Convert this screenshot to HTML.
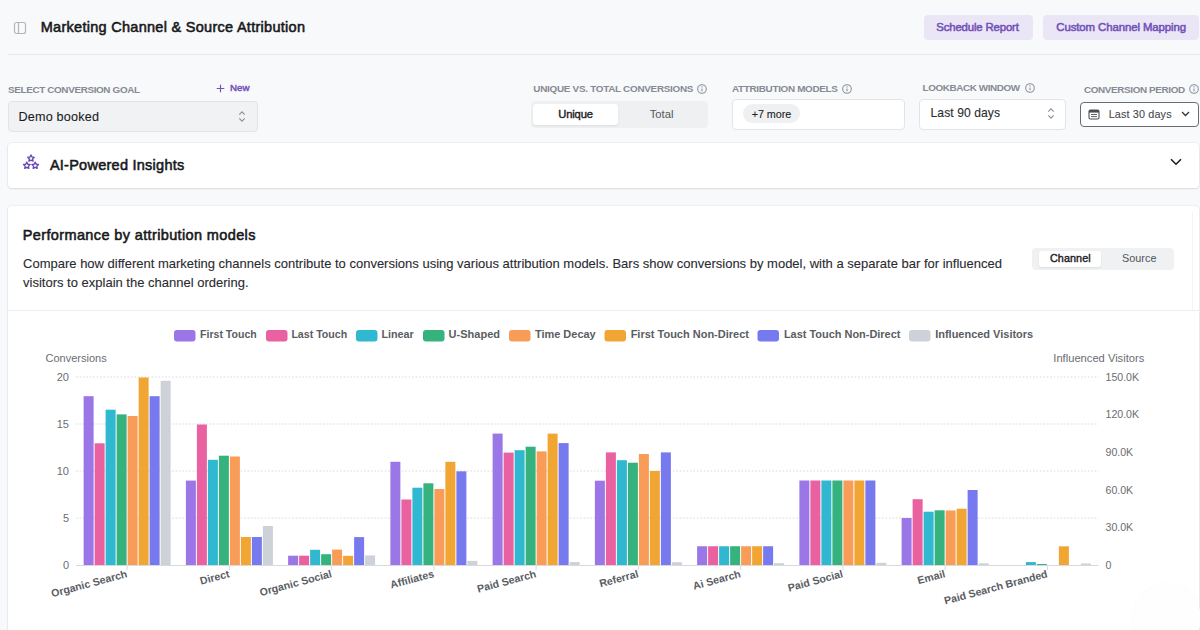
<!DOCTYPE html>
<html><head><meta charset="utf-8"><style>
html,body{margin:0;padding:0;width:1200px;height:630px;overflow:hidden;background:#f8f9fb;font-family:"Liberation Sans", sans-serif;}
.t{position:absolute;white-space:nowrap;line-height:1;transform-origin:0 0;}
.r{position:absolute;}
svg text{font-family:"Liberation Sans", sans-serif;}
</style></head><body>
<svg class="r" style="left:13px;top:21px" width="14" height="14" viewBox="0 0 14 14"><rect x="1.5" y="1.5" width="11" height="11" rx="2" fill="none" stroke="#b2b5bb" stroke-width="1.2"/><line x1="5.5" y1="1.5" x2="5.5" y2="12.5" stroke="#b2b5bb" stroke-width="1.2"/></svg>
<div class="t" style="left:40.77px;top:19.88px;font-size:14.5px;font-weight:400;color:#17181a;letter-spacing:0.279px;-webkit-text-stroke:0.55px #17181a;">Marketing Channel &amp; Source Attribution</div>
<div class="r" style="left:8px;top:54px;width:1192.00px;height:1.00px;background:#e6e8eb"></div>
<div class="r" style="left:924px;top:15px;width:109.00px;height:25.00px;background:#ebe6f6;border-radius:4px"></div>
<div class="t" style="left:936.27px;top:21.51px;font-size:11.4px;font-weight:400;color:#7352b9;letter-spacing:-0.160px;-webkit-text-stroke:0.55px #7352b9;">Schedule Report</div>
<div class="r" style="left:1043px;top:15px;width:156.00px;height:25.00px;background:#ebe6f6;border-radius:4px"></div>
<div class="t" style="left:1056.28px;top:21.51px;font-size:11.4px;font-weight:400;color:#7352b9;letter-spacing:-0.091px;-webkit-text-stroke:0.55px #7352b9;">Custom Channel Mapping</div>
<div class="t" style="left:8.00px;top:84.58px;font-size:9.9px;font-weight:700;color:#868a92;letter-spacing:-0.349px;">SELECT CONVERSION GOAL</div>
<svg class="r" style="left:215px;top:83px" width="11" height="11" viewBox="0 0 11 11"><path d="M5.5 1.7v7.6M1.7 5.5h7.6" stroke="#7352b9" stroke-width="1.15" fill="none"/></svg>
<div class="t" style="left:230.23px;top:83.14px;font-size:9.6px;font-weight:400;color:#7352b9;transform:scaleX(1.0145);-webkit-text-stroke:0.45px #7352b9;">New</div>
<div class="r" style="left:8px;top:101px;width:250.00px;height:30.50px;background:#f1f2f4;border:1px solid #e2e4e8;border-radius:4px;box-sizing:border-box"></div>
<div class="t" style="left:18.45px;top:110.59px;font-size:12.6px;font-weight:400;color:#1b1c1f;letter-spacing:0.209px;-webkit-text-stroke:0.1px #1b1c1f;">Demo booked</div>
<svg class="r" style="left:237px;top:110px" width="10" height="13" viewBox="0 0 10 13"><path d="M2.3 4.6L5 1.9l2.7 2.7M2.3 8.4L5 11.1l2.7-2.7" stroke="#8d9097" stroke-width="1.15" fill="none"/></svg>
<div class="t" style="left:533.30px;top:84.18px;font-size:9.9px;font-weight:700;color:#868a92;letter-spacing:-0.268px;">UNIQUE VS. TOTAL CONVERSIONS</div>
<svg class="r" style="left:697px;top:84px" width="10" height="10" viewBox="0 0 10 10"><circle cx="5" cy="5" r="4.3" fill="none" stroke="#8a8f98" stroke-width="1.05"/><path d="M5 4.4v2.9" stroke="#8a8f98" stroke-width="1.1"/><circle cx="5" cy="2.95" r="0.65" fill="#8a8f98"/></svg>
<div class="r" style="left:531px;top:101px;width:176.50px;height:26.50px;background:#eff0f2;border-radius:4px"></div>
<div class="r" style="left:533px;top:104px;width:85.30px;height:20.70px;background:#fff;border-radius:3px;box-shadow:0 1px 2px rgba(0,0,0,.08)"></div>
<div class="t" style="left:558.20px;top:108.68px;font-size:11.2px;font-weight:400;color:#1f2023;letter-spacing:-0.126px;-webkit-text-stroke:0.4px #1f2023;">Unique</div>
<div class="t" style="left:649.73px;top:108.68px;font-size:11.2px;font-weight:400;color:#55585e;letter-spacing:0.026px;-webkit-text-stroke:0.05px #55585e;">Total</div>
<div class="t" style="left:732.00px;top:84.18px;font-size:9.9px;font-weight:700;color:#868a92;letter-spacing:-0.311px;">ATTRIBUTION MODELS</div>
<svg class="r" style="left:842px;top:84px" width="10" height="10" viewBox="0 0 10 10"><circle cx="5" cy="5" r="4.3" fill="none" stroke="#8a8f98" stroke-width="1.05"/><path d="M5 4.4v2.9" stroke="#8a8f98" stroke-width="1.1"/><circle cx="5" cy="2.95" r="0.65" fill="#8a8f98"/></svg>
<div class="r" style="left:732px;top:99px;width:173.00px;height:31.00px;background:#fff;border:1px solid #e2e4e8;border-radius:4px;box-sizing:border-box"></div>
<div class="r" style="left:742.5px;top:104px;width:57.50px;height:19.00px;background:#eff0f2;border-radius:10px"></div>
<div class="t" style="left:751.75px;top:108.62px;font-size:10.8px;font-weight:400;color:#222;letter-spacing:-0.067px;-webkit-text-stroke:0.1px #222;">+7 more</div>
<div class="t" style="left:922.60px;top:83.08px;font-size:9.9px;font-weight:700;color:#868a92;letter-spacing:-0.407px;">LOOKBACK WINDOW</div>
<svg class="r" style="left:1025px;top:83px" width="10" height="10" viewBox="0 0 10 10"><circle cx="5" cy="5" r="4.3" fill="none" stroke="#8a8f98" stroke-width="1.05"/><path d="M5 4.4v2.9" stroke="#8a8f98" stroke-width="1.1"/><circle cx="5" cy="2.95" r="0.65" fill="#8a8f98"/></svg>
<div class="r" style="left:919px;top:98.5px;width:147.00px;height:31.00px;background:#fff;border:1px solid #e2e4e8;border-radius:4px;box-sizing:border-box"></div>
<div class="t" style="left:930.55px;top:107.31px;font-size:12.1px;font-weight:400;color:#2b2c2f;letter-spacing:0.079px;-webkit-text-stroke:0.1px #2b2c2f;">Last 90 days</div>
<svg class="r" style="left:1046px;top:107px" width="10" height="13" viewBox="0 0 10 13"><path d="M2.3 4.6L5 1.9l2.7 2.7M2.3 8.4L5 11.1l2.7-2.7" stroke="#8d9097" stroke-width="1.15" fill="none"/></svg>
<div class="t" style="left:1084.00px;top:84.58px;font-size:9.9px;font-weight:700;color:#868a92;letter-spacing:-0.366px;">CONVERSION PERIOD</div>
<svg class="r" style="left:1189px;top:84px" width="10" height="10" viewBox="0 0 10 10"><circle cx="5" cy="5" r="4.3" fill="none" stroke="#8a8f98" stroke-width="1.05"/><path d="M5 4.4v2.9" stroke="#8a8f98" stroke-width="1.1"/><circle cx="5" cy="2.95" r="0.65" fill="#8a8f98"/></svg>
<div class="r" style="left:1080px;top:101.5px;width:119.00px;height:25.00px;background:#fff;border:1px solid #686c73;border-radius:4px;box-sizing:border-box"></div>
<svg class="r" style="left:1088px;top:109px" width="12" height="11" viewBox="0 0 12 11"><rect x="1" y="1" width="10" height="9" rx="1.5" fill="none" stroke="#4a4d53" stroke-width="1.1"/><rect x="1" y="1" width="10" height="2.6" fill="#4a4d53"/><path d="M3 5.5h6M3 7.6h6" stroke="#4a4d53" stroke-width="0.9"/></svg>
<div class="t" style="left:1108.65px;top:108.62px;font-size:10.8px;font-weight:400;color:#45484e;letter-spacing:0.152px;-webkit-text-stroke:0.1px #45484e;">Last 30 days</div>
<svg class="r" style="left:1181px;top:109px" width="9" height="9" viewBox="0 0 9 9"><path d="M1 3l3.5 3.5L8 3" stroke="#333" stroke-width="1.3" fill="none"/></svg>
<div class="r" style="left:8px;top:143px;width:1191.00px;height:45.00px;background:#fff;border-radius:4px;box-shadow:0 1px 2px rgba(16,24,40,.10), 0 0 0 1px rgba(16,24,40,.04)"></div>
<svg class="r" style="left:22px;top:154px" width="18" height="16" viewBox="0 0 18 16"><path transform="translate(9 4.4) scale(0.95)" d="M0 -3.6 L1.06 -1.46 L3.42 -1.11 L1.71 0.56 L2.12 2.91 L0 1.8 L-2.12 2.91 L-1.71 0.56 L-3.42 -1.11 L-1.06 -1.46 Z" fill="none" stroke="#6849b3" stroke-width="1.45" stroke-linejoin="round"/><path transform="translate(4.8 11.6) scale(0.95)" d="M0 -3.6 L1.06 -1.46 L3.42 -1.11 L1.71 0.56 L2.12 2.91 L0 1.8 L-2.12 2.91 L-1.71 0.56 L-3.42 -1.11 L-1.06 -1.46 Z" fill="none" stroke="#6849b3" stroke-width="1.45" stroke-linejoin="round"/><path transform="translate(13.2 11.6) scale(0.95)" d="M0 -3.6 L1.06 -1.46 L3.42 -1.11 L1.71 0.56 L2.12 2.91 L0 1.8 L-2.12 2.91 L-1.71 0.56 L-3.42 -1.11 L-1.06 -1.46 Z" fill="none" stroke="#6849b3" stroke-width="1.45" stroke-linejoin="round"/></svg>
<div class="t" style="left:49.88px;top:158.08px;font-size:14.5px;font-weight:400;color:#17181a;letter-spacing:0.258px;-webkit-text-stroke:0.55px #17181a;">AI-Powered Insights</div>
<svg class="r" style="left:1169px;top:156px" width="14" height="12" viewBox="0 0 14 12"><path d="M2 3.2l5 5 5-5" stroke="#1b1c1f" stroke-width="1.6" fill="none"/></svg>
<div class="r" style="left:8px;top:206px;width:1191.00px;height:474.00px;background:#fff;border-radius:4px;box-shadow:0 1px 2px rgba(16,24,40,.10), 0 0 0 1px rgba(16,24,40,.04)"></div>
<div class="t" style="left:22.77px;top:228.28px;font-size:14.5px;font-weight:400;color:#17181a;letter-spacing:0.371px;-webkit-text-stroke:0.55px #17181a;">Performance by attribution models</div>
<div class="t" style="left:23.05px;top:257.25px;font-size:13px;font-weight:400;color:#2a2b2f;-webkit-text-stroke:0.1px #2a2b2f;">Compare how different marketing channels contribute to conversions using various attribution models. Bars show conversions by model, with a separate bar for influenced</div>
<div class="t" style="left:23.05px;top:276.15px;font-size:13px;font-weight:400;color:#2a2b2f;-webkit-text-stroke:0.1px #2a2b2f;">visitors to explain the channel ordering.</div>
<div class="r" style="left:1032px;top:247.5px;width:142.00px;height:22.00px;background:#f0f1f3;border-radius:4px"></div>
<div class="r" style="left:1039px;top:251px;width:62.00px;height:15.50px;background:#fff;border-radius:3px;box-shadow:0 1px 2px rgba(0,0,0,.08)"></div>
<div class="t" style="left:1049.90px;top:253.22px;font-size:10.8px;font-weight:400;color:#1f2023;letter-spacing:0.097px;-webkit-text-stroke:0.4px #1f2023;">Channel</div>
<div class="t" style="left:1122.03px;top:253.22px;font-size:10.8px;font-weight:400;color:#55585e;letter-spacing:0.049px;-webkit-text-stroke:0.05px #55585e;">Source</div>
<div class="r" style="left:8px;top:310px;width:1191.00px;height:1.00px;background:#eceef1"></div>
<div class="r" style="left:1192px;top:212px;width:1.00px;height:98.00px;background:#f3f4f6"></div>
<div class="r" style="left:1133px;top:584px;width:68.00px;height:68.00px;background:#fefefe;border-radius:50%;box-shadow:0 0 3px rgba(0,0,0,.035)"></div>
<svg class="r" style="left:0;top:0" width="1200" height="630" viewBox="0 0 1200 630"><rect x="174" y="330" width="21.5" height="11.5" rx="3" fill="#9a76e7"/><text x="200.1" y="338.3" font-size="11" font-weight="700" fill="#5a5d63" textLength="56.60000000000001" lengthAdjust="spacingAndGlyphs">First Touch</text><rect x="266" y="330" width="21.5" height="11.5" rx="3" fill="#e961a0"/><text x="291.4" y="338.3" font-size="11" font-weight="700" fill="#5a5d63" textLength="55.8" lengthAdjust="spacingAndGlyphs">Last Touch</text><rect x="356" y="330" width="21.5" height="11.5" rx="3" fill="#2fb8d0"/><text x="381.4" y="338.3" font-size="11" font-weight="700" fill="#5a5d63" textLength="32.3" lengthAdjust="spacingAndGlyphs">Linear</text><rect x="423" y="330" width="21.5" height="11.5" rx="3" fill="#35b27e"/><text x="448.59999999999997" y="338.3" font-size="11" font-weight="700" fill="#5a5d63" textLength="51.40000000000002" lengthAdjust="spacingAndGlyphs">U-Shaped</text><rect x="509" y="330" width="21.5" height="11.5" rx="3" fill="#f89c58"/><text x="534.9" y="338.3" font-size="11" font-weight="700" fill="#5a5d63" textLength="60.8" lengthAdjust="spacingAndGlyphs">Time Decay</text><rect x="604.5" y="330" width="21.5" height="11.5" rx="3" fill="#f1a533"/><text x="630.65" y="338.3" font-size="11" font-weight="700" fill="#5a5d63" textLength="118.3" lengthAdjust="spacingAndGlyphs">First Touch Non-Direct</text><rect x="757.5" y="330" width="21.5" height="11.5" rx="3" fill="#7779ee"/><text x="783.9" y="338.3" font-size="11" font-weight="700" fill="#5a5d63" textLength="116.55" lengthAdjust="spacingAndGlyphs">Last Touch Non-Direct</text><rect x="909" y="330" width="21.5" height="11.5" rx="3" fill="#cdd1d8"/><text x="935.1999999999999" y="338.3" font-size="11" font-weight="700" fill="#5a5d63" textLength="98.00000000000004" lengthAdjust="spacingAndGlyphs">Influenced Visitors</text><text x="45.5" y="362" font-size="11" fill="#6a6d72">Conversions</text><text x="1144.3" y="362" font-size="11" fill="#6a6d72" text-anchor="end" textLength="91" lengthAdjust="spacingAndGlyphs">Influenced Visitors</text><text x="69" y="568.8" font-size="11" fill="#6a6d72" text-anchor="end">0</text><line x1="76" y1="518.0" x2="1098.5" y2="518.0" stroke="#d8dbe0" stroke-width="1" stroke-dasharray="1.7 1.73"/><text x="69" y="521.8" font-size="11" fill="#6a6d72" text-anchor="end">5</text><line x1="76" y1="471.0" x2="1098.5" y2="471.0" stroke="#d8dbe0" stroke-width="1" stroke-dasharray="1.7 1.73"/><text x="69" y="474.8" font-size="11" fill="#6a6d72" text-anchor="end">10</text><line x1="76" y1="424.0" x2="1098.5" y2="424.0" stroke="#d8dbe0" stroke-width="1" stroke-dasharray="1.7 1.73"/><text x="69" y="427.8" font-size="11" fill="#6a6d72" text-anchor="end">15</text><line x1="76" y1="377.0" x2="1098.5" y2="377.0" stroke="#d8dbe0" stroke-width="1" stroke-dasharray="1.7 1.73"/><text x="69" y="380.8" font-size="11" fill="#6a6d72" text-anchor="end">20</text><text x="1105.5" y="568.8" font-size="10.6" fill="#6a6d72">0</text><text x="1105.5" y="531.1999999999999" font-size="10.6" fill="#6a6d72">30.0K</text><text x="1105.5" y="493.6" font-size="10.6" fill="#6a6d72">60.0K</text><text x="1105.5" y="456.0" font-size="10.6" fill="#6a6d72">90.0K</text><text x="1105.5" y="418.40000000000003" font-size="10.6" fill="#6a6d72">120.0K</text><text x="1105.5" y="380.8" font-size="10.6" fill="#6a6d72">150.0K</text><line x1="76" y1="565.5" x2="1098.5" y2="565.5" stroke="#d6d9de" stroke-width="1"/><rect x="83.62" y="396.20" width="10" height="168.80" fill="#9a76e7"/><rect x="94.62" y="443.30" width="10" height="121.70" fill="#e961a0"/><rect x="105.62" y="409.70" width="10" height="155.30" fill="#2fb8d0"/><rect x="116.62" y="414.40" width="10" height="150.60" fill="#35b27e"/><rect x="127.62" y="416.00" width="10" height="149.00" fill="#f89c58"/><rect x="138.62" y="377.50" width="10" height="187.50" fill="#f1a533"/><rect x="149.62" y="396.20" width="10" height="168.80" fill="#7779ee"/><rect x="160.62" y="380.80" width="10" height="184.20" fill="#cdd1d8"/><line x1="127.12" y1="565.0" x2="127.12" y2="570.0" stroke="#d6d9de" stroke-width="1"/><text x="127.12" y="574.3" font-size="10.6" font-weight="700" fill="#5a5d63" text-anchor="end" dominant-baseline="middle" transform="rotate(-15 127.12 574.3)">Organic Search</text><rect x="185.88" y="480.60" width="10" height="84.40" fill="#9a76e7"/><rect x="196.88" y="424.50" width="10" height="140.50" fill="#e961a0"/><rect x="207.88" y="459.80" width="10" height="105.20" fill="#2fb8d0"/><rect x="218.88" y="455.70" width="10" height="109.30" fill="#35b27e"/><rect x="229.88" y="456.50" width="10" height="108.50" fill="#f89c58"/><rect x="240.88" y="537.00" width="10" height="28.00" fill="#f1a533"/><rect x="251.88" y="537.00" width="10" height="28.00" fill="#7779ee"/><rect x="262.88" y="526.00" width="10" height="39.00" fill="#cdd1d8"/><line x1="229.38" y1="565.0" x2="229.38" y2="570.0" stroke="#d6d9de" stroke-width="1"/><text x="229.38" y="574.3" font-size="10.6" font-weight="700" fill="#5a5d63" text-anchor="end" dominant-baseline="middle" transform="rotate(-15 229.38 574.3)">Direct</text><rect x="288.12" y="555.70" width="10" height="9.30" fill="#9a76e7"/><rect x="299.12" y="555.70" width="10" height="9.30" fill="#e961a0"/><rect x="310.12" y="549.80" width="10" height="15.20" fill="#2fb8d0"/><rect x="321.12" y="554.20" width="10" height="10.80" fill="#35b27e"/><rect x="332.12" y="549.60" width="10" height="15.40" fill="#f89c58"/><rect x="343.12" y="555.80" width="10" height="9.20" fill="#f1a533"/><rect x="354.12" y="537.10" width="10" height="27.90" fill="#7779ee"/><rect x="365.12" y="555.40" width="10" height="9.60" fill="#cdd1d8"/><line x1="331.62" y1="565.0" x2="331.62" y2="570.0" stroke="#d6d9de" stroke-width="1"/><text x="331.62" y="574.3" font-size="10.6" font-weight="700" fill="#5a5d63" text-anchor="end" dominant-baseline="middle" transform="rotate(-15 331.62 574.3)">Organic Social</text><rect x="390.38" y="461.80" width="10" height="103.20" fill="#9a76e7"/><rect x="401.38" y="499.50" width="10" height="65.50" fill="#e961a0"/><rect x="412.38" y="487.70" width="10" height="77.30" fill="#2fb8d0"/><rect x="423.38" y="483.30" width="10" height="81.70" fill="#35b27e"/><rect x="434.38" y="489.00" width="10" height="76.00" fill="#f89c58"/><rect x="445.38" y="461.80" width="10" height="103.20" fill="#f1a533"/><rect x="456.38" y="471.30" width="10" height="93.70" fill="#7779ee"/><rect x="467.38" y="560.90" width="10" height="4.10" fill="#cdd1d8"/><line x1="433.88" y1="565.0" x2="433.88" y2="570.0" stroke="#d6d9de" stroke-width="1"/><text x="433.88" y="574.3" font-size="10.6" font-weight="700" fill="#5a5d63" text-anchor="end" dominant-baseline="middle" transform="rotate(-15 433.88 574.3)">Affiliates</text><rect x="492.62" y="433.60" width="10" height="131.40" fill="#9a76e7"/><rect x="503.62" y="452.60" width="10" height="112.40" fill="#e961a0"/><rect x="514.62" y="450.20" width="10" height="114.80" fill="#2fb8d0"/><rect x="525.62" y="446.70" width="10" height="118.30" fill="#35b27e"/><rect x="536.62" y="451.40" width="10" height="113.60" fill="#f89c58"/><rect x="547.62" y="433.60" width="10" height="131.40" fill="#f1a533"/><rect x="558.62" y="443.10" width="10" height="121.90" fill="#7779ee"/><rect x="569.62" y="562.10" width="10" height="2.90" fill="#cdd1d8"/><line x1="536.12" y1="565.0" x2="536.12" y2="570.0" stroke="#d6d9de" stroke-width="1"/><text x="536.12" y="574.3" font-size="10.6" font-weight="700" fill="#5a5d63" text-anchor="end" dominant-baseline="middle" transform="rotate(-15 536.12 574.3)">Paid Search</text><rect x="594.88" y="480.70" width="10" height="84.30" fill="#9a76e7"/><rect x="605.88" y="452.40" width="10" height="112.60" fill="#e961a0"/><rect x="616.88" y="460.20" width="10" height="104.80" fill="#2fb8d0"/><rect x="627.88" y="462.70" width="10" height="102.30" fill="#35b27e"/><rect x="638.88" y="454.00" width="10" height="111.00" fill="#f89c58"/><rect x="649.88" y="471.00" width="10" height="94.00" fill="#f1a533"/><rect x="660.88" y="452.40" width="10" height="112.60" fill="#7779ee"/><rect x="671.88" y="562.20" width="10" height="2.80" fill="#cdd1d8"/><line x1="638.38" y1="565.0" x2="638.38" y2="570.0" stroke="#d6d9de" stroke-width="1"/><text x="638.38" y="574.3" font-size="10.6" font-weight="700" fill="#5a5d63" text-anchor="end" dominant-baseline="middle" transform="rotate(-15 638.38 574.3)">Referral</text><rect x="697.12" y="546.25" width="10" height="18.75" fill="#9a76e7"/><rect x="708.12" y="546.25" width="10" height="18.75" fill="#e961a0"/><rect x="719.12" y="546.25" width="10" height="18.75" fill="#2fb8d0"/><rect x="730.12" y="546.25" width="10" height="18.75" fill="#35b27e"/><rect x="741.12" y="546.25" width="10" height="18.75" fill="#f89c58"/><rect x="752.12" y="546.25" width="10" height="18.75" fill="#f1a533"/><rect x="763.12" y="546.25" width="10" height="18.75" fill="#7779ee"/><rect x="774.12" y="563.20" width="10" height="1.80" fill="#cdd1d8"/><line x1="740.62" y1="565.0" x2="740.62" y2="570.0" stroke="#d6d9de" stroke-width="1"/><text x="740.62" y="574.3" font-size="10.6" font-weight="700" fill="#5a5d63" text-anchor="end" dominant-baseline="middle" transform="rotate(-15 740.62 574.3)">Ai Search</text><rect x="799.38" y="480.50" width="10" height="84.50" fill="#9a76e7"/><rect x="810.38" y="480.50" width="10" height="84.50" fill="#e961a0"/><rect x="821.38" y="480.50" width="10" height="84.50" fill="#2fb8d0"/><rect x="832.38" y="480.50" width="10" height="84.50" fill="#35b27e"/><rect x="843.38" y="480.50" width="10" height="84.50" fill="#f89c58"/><rect x="854.38" y="480.50" width="10" height="84.50" fill="#f1a533"/><rect x="865.38" y="480.50" width="10" height="84.50" fill="#7779ee"/><rect x="876.38" y="562.80" width="10" height="2.20" fill="#cdd1d8"/><line x1="842.88" y1="565.0" x2="842.88" y2="570.0" stroke="#d6d9de" stroke-width="1"/><text x="842.88" y="574.3" font-size="10.6" font-weight="700" fill="#5a5d63" text-anchor="end" dominant-baseline="middle" transform="rotate(-15 842.88 574.3)">Paid Social</text><rect x="901.62" y="518.00" width="10" height="47.00" fill="#9a76e7"/><rect x="912.62" y="499.20" width="10" height="65.80" fill="#e961a0"/><rect x="923.62" y="511.70" width="10" height="53.30" fill="#2fb8d0"/><rect x="934.62" y="510.30" width="10" height="54.70" fill="#35b27e"/><rect x="945.62" y="510.50" width="10" height="54.50" fill="#f89c58"/><rect x="956.62" y="508.70" width="10" height="56.30" fill="#f1a533"/><rect x="967.62" y="490.00" width="10" height="75.00" fill="#7779ee"/><rect x="978.62" y="563.30" width="10" height="1.70" fill="#cdd1d8"/><line x1="945.12" y1="565.0" x2="945.12" y2="570.0" stroke="#d6d9de" stroke-width="1"/><text x="945.12" y="574.3" font-size="10.6" font-weight="700" fill="#5a5d63" text-anchor="end" dominant-baseline="middle" transform="rotate(-15 945.12 574.3)">Email</text><rect x="1025.88" y="562.10" width="10" height="2.90" fill="#2fb8d0"/><rect x="1036.88" y="564.00" width="10" height="1.00" fill="#35b27e"/><rect x="1058.88" y="546.30" width="10" height="18.70" fill="#f1a533"/><rect x="1080.88" y="563.50" width="10" height="1.50" fill="#cdd1d8"/><line x1="1047.38" y1="565.0" x2="1047.38" y2="570.0" stroke="#d6d9de" stroke-width="1"/><text x="1047.38" y="574.3" font-size="10.6" font-weight="700" fill="#5a5d63" text-anchor="end" dominant-baseline="middle" transform="rotate(-15 1047.38 574.3)">Paid Search Branded</text></svg>
</body></html>
